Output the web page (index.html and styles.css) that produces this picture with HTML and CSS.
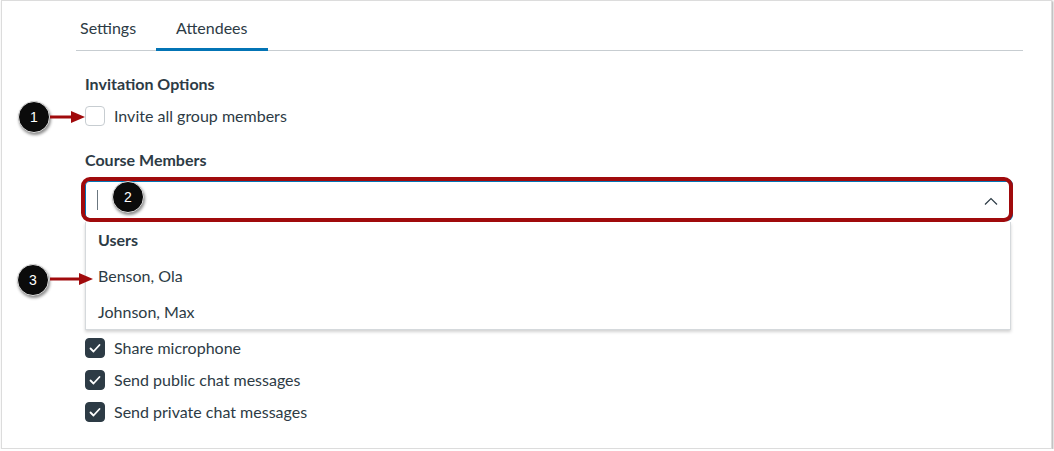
FILE: index.html
```html
<!DOCTYPE html>
<html>
<head>
<meta charset="utf-8">
<link rel="stylesheet" href="styles.css">
</head>
<body>
<div class="frame">
  <div class="tabs">
    <div class="tab tab-first">Settings</div>
    <div class="tab tab-active">Attendees</div>
  </div>
  <div class="form">
    <div class="heading h-invite">Invitation Options</div>
    <label class="row row-invite"><span class="box"></span>Invite all group members</label>
    <div class="heading h-course">Course Members</div>
    <div class="input">
      <span class="caret"></span>
      <svg class="chevron" width="14" height="8" viewBox="0 0 14 8"><polyline points="1,7.5 7,1.5 13,7.5" fill="none" stroke="#2d3b45" stroke-width="1.2"/></svg>
      <span class="highlight"></span>
    </div>
    <div class="menu">
      <div class="menu-item menu-group">Users</div>
      <div class="menu-item">Benson, Ola</div>
      <div class="menu-item">Johnson, Max</div>
    </div>
    <div class="checks">
      <label class="row"><span class="box checked"><svg width="20" height="20" viewBox="0 0 20 20"><polyline points="5.5,10.5 8.5,13.5 14.5,7" fill="none" stroke="#fff" stroke-width="1.8" stroke-linecap="round" stroke-linejoin="round"/></svg></span>Share microphone</label>
      <label class="row"><span class="box checked"><svg width="20" height="20" viewBox="0 0 20 20"><polyline points="5.5,10.5 8.5,13.5 14.5,7" fill="none" stroke="#fff" stroke-width="1.8" stroke-linecap="round" stroke-linejoin="round"/></svg></span>Send public chat messages</label>
      <label class="row"><span class="box checked"><svg width="20" height="20" viewBox="0 0 20 20"><polyline points="5.5,10.5 8.5,13.5 14.5,7" fill="none" stroke="#fff" stroke-width="1.8" stroke-linecap="round" stroke-linejoin="round"/></svg></span>Send private chat messages</label>
    </div>
  </div>

  <div class="badge badge-1">1</div>
  <svg class="arrow arrow-1" width="36" height="12" viewBox="0 0 36 12"><line x1="0" y1="6" x2="24" y2="6" stroke="#a00a0c" stroke-width="3"/><polygon points="21,0 35,6 21,12" fill="#a00a0c"/></svg>
  <div class="badge badge-2">2</div>
  <div class="badge badge-3">3</div>
  <svg class="arrow arrow-3" width="44" height="12" viewBox="0 0 44 12"><line x1="0" y1="6" x2="32" y2="6" stroke="#a00a0c" stroke-width="3"/><polygon points="29,0 43,6 29,12" fill="#a00a0c"/></svg>
</div>
</body>
</html>
```
FILE: styles.css
```css
html, body {
  margin: 0;
  padding: 0;
  background: #fff;
}
body {
  font-family: Lato, "Liberation Sans", sans-serif;
  font-size: 16px;
  line-height: 24px;
  color: #2d3b45;
}
.frame {
  position: relative;
  box-sizing: border-box;
  margin-left: 1px;
  width: 1051px;
  height: 449px;
  border: 1px solid #dcdcdc;
  box-shadow: 1px 1px 2px rgba(0,0,0,0.35);
  padding: 0 28px 0 74px;
}
.tabs {
  display: flex;
  border-bottom: 1px solid #c7cdd1;
}
.tab {
  padding: 15px 20px 8px;
  border-bottom: 3px solid transparent;
  margin-bottom: -1px;
}
.tab-first {
  padding-left: 4px;
  padding-right: 20px;
}
.tab-active {
  border-bottom-color: #0374b5;
}
.form {
  padding: 0 12px 0 9px;
}
.heading {
  font-weight: 700;
}
.h-invite { margin-top: 21px; }
.h-course { margin-top: 20px; }
.row {
  display: flex;
  align-items: center;
  gap: 9px;
}
.row-invite { margin-top: 8px; }
.box {
  box-sizing: border-box;
  width: 20px;
  height: 20px;
  border: 1px solid #c7cdd1;
  border-radius: 4px;
  background: #fff;
  flex: none;
  display: flex;
}
.box.checked {
  background: #2d3b45;
  border-color: #2d3b45;
}
.box.checked svg { margin: -1px; }
.input {
  position: relative;
  box-sizing: border-box;
  margin-top: 9px;
  height: 38px;
  border: 1px solid #0374b5;
  border-radius: 4px;
  box-shadow: 0 0 0 2px #0374b5;
  display: flex;
  align-items: center;
  padding: 0 12px 0 11px;
}
.caret {
  width: 1px;
  height: 20px;
  background: #6b7780;
}
.chevron {
  margin-left: auto;
  margin-top: 2px;
}
.highlight {
  position: absolute;
  top: -5px;
  left: -5px;
  right: -3px;
  bottom: -4px;
  border: 4px solid #a00a0c;
  border-radius: 9px;
}
.menu {
  margin-top: 3px;
  border: 1px solid #d5d9dc;
  border-top: none;
  box-shadow: 0 2px 3px rgba(0,0,0,0.18);
  height: 107px;
}
.menu-item {
  height: 36px;
  line-height: 36px;
  padding-left: 12px;
}
.menu-group {
  font-weight: 700;
}
.checks {
  margin-top: 6px;
  display: flex;
  flex-direction: column;
  gap: 8px;
}
.badge {
  position: absolute;
  width: 32px;
  height: 32px;
  border-radius: 50%;
  background: #0b0b0b;
  border: 1px solid #e0e0e0;
  box-sizing: border-box;
  box-shadow: 1px 2px 3px rgba(0,0,0,0.45);
  color: #fff;
  font-family: "Liberation Sans", Arial, sans-serif;
  font-size: 14px;
  line-height: 30px;
  text-align: center;
}
.badge-1 { left: 16px; top: 100px; }
.badge-2 { left: 110px; top: 180px; }
.badge-3 { left: 15px; top: 263px; }
.arrow { position: absolute; }
.arrow-1 { left: 48px; top: 110px; }
.arrow-3 { left: 48px; top: 272px; }
```
